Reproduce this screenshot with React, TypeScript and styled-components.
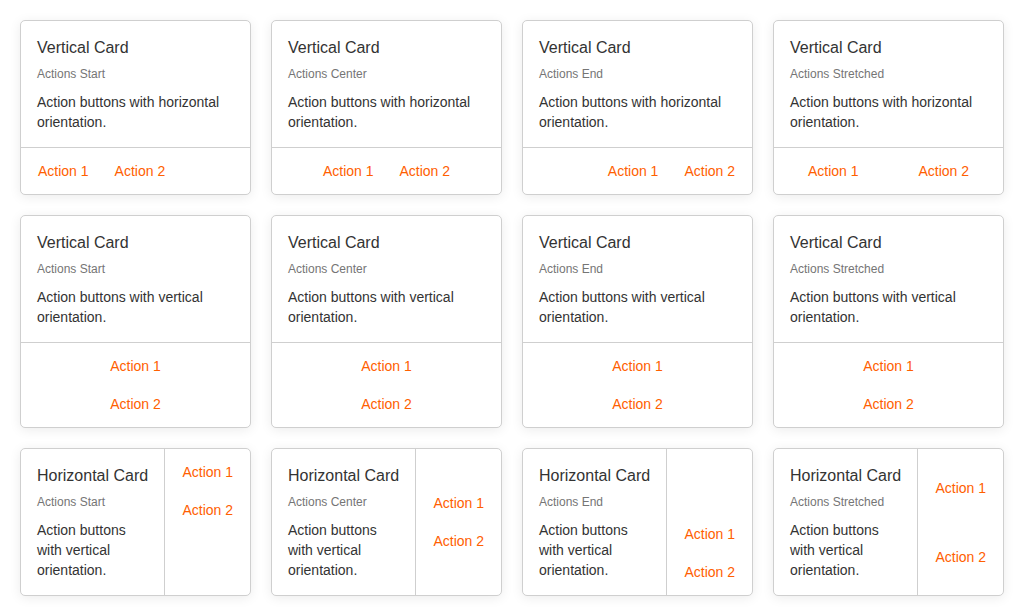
import * as React from 'react';
import styled, { createGlobalStyle } from 'styled-components';

type Align = 'start' | 'center' | 'end' | 'stretch';

const GlobalStyle = createGlobalStyle`
  body {
    margin: 0;
    background: #ffffff;
    font-family: "Liberation Sans", Arial, sans-serif;
    color: #333333;
  }
`;

const Grid = styled.div`
  display: grid;
  grid-template-columns: repeat(4, 1fr);
  gap: 20px;
  padding: 20px;
  align-items: start;
`;

const Card = styled.div<{ $horizontal?: boolean }>`
  display: flex;
  flex-direction: ${p => (p.$horizontal ? 'row' : 'column')};
  background: #fff;
  border: 1px solid #cfcfcf;
  border-radius: 5px;
  box-shadow: 0 2px 12px rgba(0, 0, 0, 0.08);
  overflow: hidden;
`;

const Content = styled.div`
  flex: 1;
  padding: 17px 16px 15px;
`;

const Title = styled.div`
  font-size: 16px;
  line-height: 20px;
  color: #333;
  white-space: nowrap;
`;

const Subtitle = styled.div`
  margin-top: 8px;
  font-size: 12px;
  line-height: 16px;
  color: #757575;
`;

const Body = styled.div`
  margin-top: 10px;
  font-size: 14px;
  line-height: 20px;
  color: #333;
`;

const justifyMap: Record<Align, string> = {
  start: 'flex-start',
  center: 'center',
  end: 'flex-end',
  stretch: 'stretch',
};

const Actions = styled.div<{ $vertical: boolean; $align: Align; $side?: boolean }>`
  display: flex;
  flex-direction: ${p => (p.$vertical ? 'column' : 'row')};
  justify-content: ${p => (p.$vertical && !p.$side ? 'flex-start' : justifyMap[p.$align])};
  gap: ${p => (p.$vertical ? '2px' : '8px')};
  padding: 5px 8px;
  ${p => (p.$side ? 'border-left: 1px solid #cfcfcf;' : 'border-top: 1px solid #cfcfcf;')}
`;

const ActionButton = styled.button<{ $grow: boolean }>`
  flex: ${p => (p.$grow ? '1 1 0' : '0 0 auto')};
  min-height: 36px;
  padding: 0 9px;
  border: none;
  background: transparent;
  color: #ff6000;
  font-family: "Liberation Sans", Arial, sans-serif;
  font-size: 14px;
  cursor: pointer;
`;

const labels: Record<Align, string> = {
  start: 'Actions Start',
  center: 'Actions Center',
  end: 'Actions End',
  stretch: 'Actions Stretched',
};

const aligns: Align[] = ['start', 'center', 'end', 'stretch'];

function VerticalCard({ align, vertical }: { align: Align; vertical: boolean }) {
  return (
    <Card>
      <Content>
        <Title>Vertical Card</Title>
        <Subtitle>{labels[align]}</Subtitle>
        <Body>Action buttons with {vertical ? 'vertical' : 'horizontal'} orientation.</Body>
      </Content>
      <Actions $vertical={vertical} $align={align}>
        <ActionButton $grow={align === 'stretch' && !vertical}>Action 1</ActionButton>
        <ActionButton $grow={align === 'stretch' && !vertical}>Action 2</ActionButton>
      </Actions>
    </Card>
  );
}

function HorizontalCard({ align }: { align: Align }) {
  return (
    <Card $horizontal>
      <Content>
        <Title>Horizontal Card</Title>
        <Subtitle>{labels[align]}</Subtitle>
        <Body>Action buttons with vertical orientation.</Body>
      </Content>
      <Actions $vertical $side $align={align}>
        <ActionButton $grow={align === 'stretch'}>Action 1</ActionButton>
        <ActionButton $grow={align === 'stretch'}>Action 2</ActionButton>
      </Actions>
    </Card>
  );
}

export default function App() {
  return (
    <>
      <GlobalStyle />
      <Grid>
        {aligns.map(a => (
          <VerticalCard key={'h' + a} align={a} vertical={false} />
        ))}
        {aligns.map(a => (
          <VerticalCard key={'v' + a} align={a} vertical />
        ))}
        {aligns.map(a => (
          <HorizontalCard key={'x' + a} align={a} />
        ))}
      </Grid>
    </>
  );
}
